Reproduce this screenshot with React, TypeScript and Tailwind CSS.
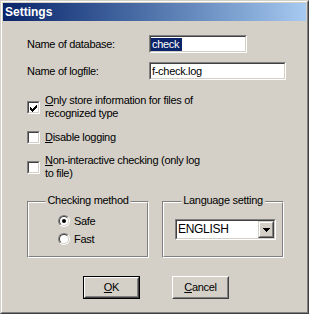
import React from "react";

const font = { fontFamily: '"Liberation Sans", Arial, sans-serif' };

function Sunken({ className = "", children }: { className?: string; children?: React.ReactNode }) {
  return (
    <div className={"border border-t-[#808080] border-l-[#808080] border-b-white border-r-white " + className}>
      <div className="w-full h-full border border-t-[#404040] border-l-[#404040] border-b-[#d4d0c8] border-r-[#d4d0c8] bg-white flex items-center overflow-hidden">
        {children}
      </div>
    </div>
  );
}

function CheckBox({ checked }: { checked?: boolean }) {
  return (
    <div className="w-[13px] h-[13px] shrink-0 border border-t-[#808080] border-l-[#808080] border-b-white border-r-white">
      <div className="w-full h-full border border-t-[#404040] border-l-[#404040] border-b-[#d4d0c8] border-r-[#d4d0c8] bg-white">
        {checked && (
          <svg width="9" height="9" viewBox="0 0 9 9" shapeRendering="crispEdges" className="block">
            <g fill="#000">
              <rect x="7" y="2" width="1" height="1" />
              <rect x="6" y="3" width="2" height="1" />
              <rect x="1" y="4" width="1" height="1" />
              <rect x="5" y="4" width="3" height="1" />
              <rect x="1" y="5" width="2" height="1" />
              <rect x="4" y="5" width="3" height="1" />
              <rect x="1" y="6" width="5" height="1" />
              <rect x="2" y="7" width="3" height="1" />
              <rect x="3" y="8" width="1" height="1" />
            </g>
          </svg>
        )}
      </div>
    </div>
  );
}

function Radio({ checked }: { checked?: boolean }) {
  return (
    <div className="w-[12px] h-[12px] shrink-0 rounded-full border border-t-[#808080] border-l-[#808080] border-b-white border-r-white">
      <div className="w-full h-full rounded-full border border-t-[#404040] border-l-[#404040] border-b-[#d4d0c8] border-r-[#d4d0c8] bg-white flex items-center justify-center">
        {checked && <div className="w-[4px] h-[4px] rounded-full bg-black" />}
      </div>
    </div>
  );
}

function GroupBox({ title, children }: { title: string; children?: React.ReactNode }) {
  return (
    <div className="relative w-[122px] h-[57px] border border-t-[#808080] border-l-[#808080] border-b-white border-r-white">
      <div className="w-full h-full border border-t-white border-l-white border-b-[#808080] border-r-[#808080]">
        {children}
      </div>
      <div className="absolute left-1/2 -translate-x-1/2 -top-[8px] bg-[#d4d0c8] px-[2px] leading-[13px] whitespace-nowrap">
        {title}
      </div>
    </div>
  );
}

function Button({ children, isDefault }: { children: React.ReactNode; isDefault?: boolean }) {
  const inner = (
    <div className="w-full h-full border border-t-white border-l-white border-b-[#404040] border-r-[#404040]">
      <div className="w-full h-full border border-t-[#d4d0c8] border-l-[#d4d0c8] border-b-[#808080] border-r-[#808080] flex items-center justify-center">
        {children}
      </div>
    </div>
  );
  return isDefault ? (
    <div className="w-[57px] h-[23px] border border-black">{inner}</div>
  ) : (
    <div className="w-[57px] h-[23px]">{inner}</div>
  );
}

export default function App() {
  return (
    <div
      className="w-[309px] h-[314px] bg-[#d4d0c8] border border-t-[#d4d0c8] border-l-[#d4d0c8] border-b-[#404040] border-r-[#404040] text-black text-[11px] tracking-[-0.3px]"
      style={font}
    >
      <div className="w-full h-full border border-t-white border-l-white border-b-[#808080] border-r-[#808080] p-px flex flex-col">
        <div className="h-[18px] shrink-0 bg-gradient-to-r from-[#0a246a] to-[#a6caf0] flex items-center pl-[2px]">
          <span className="text-white font-bold text-[12px] tracking-normal leading-none">Settings</span>
        </div>

        <div className="flex flex-col pl-[24px]">
          <div className="flex items-center h-[18px] mt-[14px]">
            <div className="w-[122px] leading-[13px]">Name of database:</div>
            <Sunken className="w-[98px] h-[18px]">
              <span className="bg-[#0a246a] text-white leading-[13px] pl-[1px] pr-[3px]">check</span>
            </Sunken>
          </div>

          <div className="flex items-center h-[18px] mt-[9px]">
            <div className="w-[122px] leading-[13px]">Name of logfile:</div>
            <Sunken className="w-[137px] h-[18px]">
              <span className="leading-[13px] pl-[1px]">f-check.log</span>
            </Sunken>
          </div>

          <div className="flex items-center gap-[5px] mt-[14px]">
            <CheckBox checked />
            <div className="leading-[13px]">
              <span className="underline">O</span>nly store information for files of
              <br />
              recognized type
            </div>
          </div>

          <div className="flex items-center gap-[5px] mt-[11px]">
            <CheckBox />
            <div className="leading-[13px]">
              <span className="underline">D</span>isable logging
            </div>
          </div>

          <div className="flex items-center gap-[5px] mt-[10px]">
            <CheckBox />
            <div className="leading-[13px]">
              <span className="underline">N</span>on-interactive checking (only log
              <br />
              to file)
            </div>
          </div>

          <div className="flex gap-[13px] mt-[21px]">
            <GroupBox title="Checking method">
              <div className="flex flex-col pl-[29px] pt-[9px]">
                <div className="flex items-center gap-[4px] h-[18px]">
                  <Radio checked />
                  <span className="leading-[13px]">Safe</span>
                </div>
                <div className="flex items-center gap-[4px] h-[18px]">
                  <Radio />
                  <span className="leading-[13px]">Fast</span>
                </div>
              </div>
            </GroupBox>
            <GroupBox title="Language setting">
              <div className="pl-[11px] pt-[16px]">
                <Sunken className="w-[101px] h-[21px]">
                  <div className="flex-1 leading-[13px] pl-[1px] text-[12px]">ENGLISH</div>
                  <div className="w-[16px] h-[17px] shrink-0 border border-t-[#d4d0c8] border-l-[#d4d0c8] border-b-[#404040] border-r-[#404040]">
                    <div className="w-full h-full bg-[#d4d0c8] border border-t-white border-l-white border-b-[#808080] border-r-[#808080] flex items-center justify-center">
                      <svg width="7" height="4" viewBox="0 0 7 4" shapeRendering="crispEdges" className="block">
                        <path d="M0 0h7v1h-1v1h-1v1h-1v1h-1v-1h-1v-1h-1v-1h-1z" fill="#000" />
                      </svg>
                    </div>
                  </div>
                </Sunken>
              </div>
            </GroupBox>
          </div>

          <div className="flex gap-[32px] mt-[18px] ml-[56px]">
            <Button isDefault>
              <span className="leading-[13px]">
                <span className="underline">O</span>K
              </span>
            </Button>
            <Button>
              <span className="leading-[13px]">
                <span className="underline">C</span>ancel
              </span>
            </Button>
          </div>
        </div>
      </div>
    </div>
  );
}
